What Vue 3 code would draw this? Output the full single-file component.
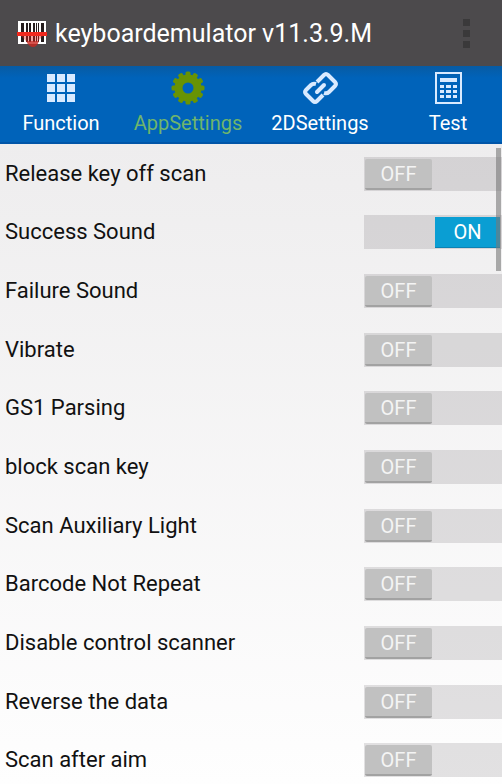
<template>
  <div class="screen">
    <header class="title-bar">
      <svg class="logo" viewBox="0 0 30 30" aria-hidden="true">
        <rect x="1" y="3" width="28" height="23" fill="#fff" />
        <path d="M4 5h3v19H4zM9 5h2v19H9zM12 5h2v19h-2zM16 5h2v19h-2zM19 5h1v19h-1zM21 5h1v19h-1zM24 5h3v19h-3z" fill="#241c1c" />
        <path d="M4 18h22l-5 5H9z" fill="#e5231b" opacity="0.4" />
        <path d="M9 23h13q-2 6-6 6t-7-6z" fill="#c9271f" opacity="0.8" />
        <path d="M0 14h30v4H0z" fill="#f0291e" />
      </svg>
      <h1>keyboardemulator v11.3.9.M</h1>
      <button class="menu-btn" type="button" aria-label="Menu">
        <span></span>
        <span></span>
        <span></span>
      </button>
    </header>

    <nav class="tabs">
      <button
        v-for="tab in tabs"
        :key="tab"
        type="button"
        class="tab"
        :class="{ active: tab === activeTab }"
        @click="activeTab = tab"
      >
        <svg v-if="tab === 'Function'" viewBox="0 0 36 36" fill="currentColor" aria-hidden="true">
          <path d="M4 4h8v8H4zM14 4h8v8h-8zM24 4h8v8h-8zM4 14h8v8H4zM14 14h8v8h-8zM24 14h8v8h-8zM4 24h8v8H4zM14 24h8v8h-8zM24 24h8v8h-8z" />
        </svg>
        <svg v-else-if="tab === 'AppSettings'" viewBox="0 0 36 36" aria-hidden="true">
          <circle cx="18" cy="18" r="9.5" fill="none" stroke="currentColor" stroke-width="8" />
          <rect
            v-for="n in 12"
            :key="n"
            x="15.5"
            y="1.5"
            width="5"
            height="5"
            rx="1.5"
            fill="currentColor"
            :transform="`rotate(${n * 30} 18 18)`"
          />
        </svg>
        <svg v-else-if="tab === '2DSettings'" viewBox="0 0 36 36" fill="none" stroke="currentColor" stroke-width="4" stroke-linejoin="round" aria-hidden="true">
          <path d="m15 12 7-7q2-2 4 0l7 7q2 2 0 4l-6 6q-2 2-5 1" />
          <path d="M14 14q-3-1-5 1l-5 5q-2 2 0 4l7 7q2 2 4 0l6-6" />
          <path d="m15 22 7-7" stroke-linecap="round" />
        </svg>
        <svg v-else viewBox="0 0 36 36" fill="currentColor" aria-hidden="true">
          <rect x="6" y="3" width="25" height="30" fill="none" stroke="currentColor" stroke-width="2" />
          <path d="M10 8h17v4H10zM10 15h4v3h-4zM16 15h5v3h-5zM23 15h4v3h-4zM10 20h4v3h-4zM16 20h5v3h-5zM23 20h4v3h-4zM10 25h4v3h-4zM16 25h5v3h-5zM23 25h4v3h-4z" />
        </svg>
        <span>{{ tab }}</span>
      </button>
    </nav>

    <main class="content">
      <div class="settings">
        <label v-for="item in settings" :key="item.name" class="row">
          <span class="name">{{ item.name }}</span>
          <span class="switch">
            <input type="checkbox" role="switch" v-model="item.on" :aria-label="item.name" />
            <span class="thumb" aria-hidden="true">{{ item.on ? 'ON' : 'OFF' }}</span>
          </span>
        </label>
      </div>
      <div class="scroll-thumb"></div>
    </main>
  </div>
</template>

<script setup>
import { reactive, ref } from 'vue';

const tabs = ['Function', 'AppSettings', '2DSettings', 'Test'];
const activeTab = ref('AppSettings');

const settings = reactive([
  { name: 'Release key off scan', on: false },
  { name: 'Success Sound', on: true },
  { name: 'Failure Sound', on: false },
  { name: 'Vibrate', on: false },
  { name: 'GS1 Parsing', on: false },
  { name: 'block scan key', on: false },
  { name: 'Scan Auxiliary Light', on: false },
  { name: 'Barcode Not Repeat', on: false },
  { name: 'Disable control scanner', on: false },
  { name: 'Reverse the data', on: false },
  { name: 'Scan after aim', on: false },
]);
</script>

<style>
body {
  margin: 0;
}
</style>

<style scoped>
.screen {
  display: flex;
  flex-direction: column;
  height: 100vh;
  overflow: hidden;
  font-family: Roboto, "Liberation Sans", sans-serif;
  color: #111;
}

button {
  padding: 0;
  border: none;
  background: none;
  font-family: inherit;
  cursor: pointer;
}

.title-bar {
  display: flex;
  flex-shrink: 0;
  align-items: center;
  height: 66px;
  padding: 0 26px 0 17px;
  box-sizing: border-box;
  background: #4c4a4c;
}

.logo {
  width: 30px;
  height: 30px;
  margin-right: 8px;
}

h1 {
  flex: 1;
  margin: 0;
  padding-top: 2px;
  font-size: 25px;
  font-weight: 400;
  line-height: 32px;
  color: #fff;
}

.menu-btn {
  display: flex;
  flex-direction: column;
  align-items: center;
  gap: 4px;
  width: 20px;
}

.menu-btn span {
  width: 7px;
  height: 7px;
  background: #3a393a;
}

.tabs {
  display: grid;
  flex-shrink: 0;
  grid-template-columns: 122fr 132fr 132fr 124fr;
  height: 78px;
  margin-right: -8px;
  box-sizing: border-box;
  border-bottom: 2px solid #0055a8;
  background: linear-gradient(#075ba3, #0063ba 12px);
}

.tab {
  display: flex;
  flex-direction: column;
  align-items: center;
  padding-top: 4px;
  font-size: 20px;
  line-height: 24px;
  color: #fff;
}

.tab svg {
  width: 36px;
  height: 36px;
  margin-bottom: 5px;
  color: #d9eaff;
}

.tab.active {
  color: #6fb56c;
}

.tab.active svg {
  color: #689304;
}

.content {
  position: relative;
  flex: 1;
  min-height: 0;
  overflow: hidden;
  background: linear-gradient(#eeedee, #fefefe);
}

.settings {
  display: grid;
  grid-auto-rows: 1fr;
  min-height: calc(100vh - 139px);
}

.row {
  display: flex;
  align-items: center;
  justify-content: space-between;
  padding: 1px 0 0 5px;
}

.name {
  font-size: 22px;
  line-height: 28px;
}

.switch {
  position: relative;
  display: flex;
  width: 138px;
  height: 34px;
  padding: 2px 2px 1px 1px;
  box-sizing: border-box;
  background: rgba(70, 60, 70, 0.15);
}

.switch input {
  position: absolute;
  inset: 0;
  width: 100%;
  height: 100%;
  margin: 0;
  opacity: 0;
  cursor: pointer;
}

.thumb {
  width: 67px;
  box-sizing: border-box;
  border-bottom: 2px solid #a2a2a2;
  border-radius: 2px;
  background: #c1c1c1;
  font-size: 20px;
  line-height: 31px;
  text-align: center;
  color: #f4f4f4;
}

.switch input:checked + .thumb {
  width: 65px;
  margin-left: auto;
  border-bottom: 1px solid #0b82b3;
  border-radius: 0;
  background: #0a9ed3;
  color: #fff;
}

.scroll-thumb {
  position: absolute;
  top: 4px;
  right: 1px;
  width: 5px;
  height: 123px;
  background: rgba(120, 120, 120, 0.6);
}
</style>
